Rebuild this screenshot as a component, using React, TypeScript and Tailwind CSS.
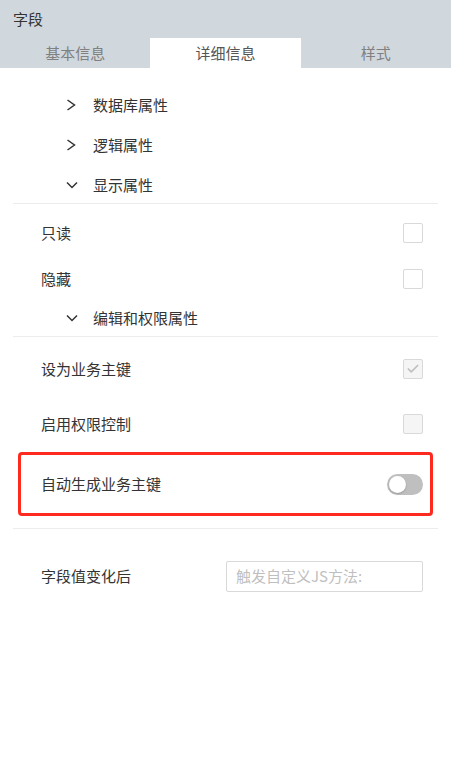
import { Check } from 'lucide-react'

const font = { fontFamily: '"Noto Sans CJK SC", "Noto Sans", sans-serif' }

function Chevron({ open }: { open?: boolean }) {
  if (open) {
    return (
      <svg width="12" height="8" viewBox="0 0 12 8" fill="none" stroke="#333" strokeWidth="1.5">
        <polyline points="1,1.5 6,6.5 11,1.5" />
      </svg>
    )
  }
  return (
    <svg width="10" height="12" viewBox="0 0 10 12" fill="none" stroke="#333" strokeWidth="1.5">
      <polyline points="1.5,1 8.5,6 1.5,11" />
    </svg>
  )
}

function Section({ label, open }: { label: string; open?: boolean }) {
  return (
    <div className="flex items-center h-10 pl-[53px] text-[15px] text-[#333]">
      <span className="w-[27px] flex items-center">
        <Chevron open={open} />
      </span>
      <span>{label}</span>
    </div>
  )
}

function Box({ checked, disabled }: { checked?: boolean; disabled?: boolean }) {
  return (
    <span
      className={`w-[20px] h-[20px] rounded-[2px] border border-[#d9d9d9] flex items-center justify-center ${
        disabled ? 'bg-[#f5f5f5]' : 'bg-white'
      }`}
    >
      {checked && <Check className="w-[14px] h-[14px] text-[#c0c0c0]" strokeWidth={3} />}
    </span>
  )
}

function Row({ label, children, h = 'h-[46px]' }: { label: string; children: React.ReactNode; h?: string }) {
  return (
    <div className={`flex items-center justify-between ${h} pl-[28px] pr-[15px] text-[15px] text-[#333]`}>
      <span>{label}</span>
      {children}
    </div>
  )
}

export default function App() {
  return (
    <div className="w-[451px] h-[759px] bg-white" style={font}>
      {/* Header */}
      <div className="bg-[#d0d8de]">
        <div className="h-[38px] flex items-center px-[13px] text-[15px] text-[#333]">字段</div>
        <div className="grid grid-cols-3 h-[30px] text-[15px]">
          <div className="flex items-center justify-center text-[#808080]">基本信息</div>
          <div className="flex items-center justify-center bg-white text-[#555]">详细信息</div>
          <div className="flex items-center justify-center text-[#808080]">样式</div>
        </div>
      </div>

      <div className="px-[13px] pt-[17px]">
        <Section label="数据库属性" />
        <Section label="逻辑属性" />
        <Section label="显示属性" open />
        <div className="border-t border-[#ececec] mt-[-2px]" />

        <div className="pt-[6px]">
          <Row label="只读"><Box /></Row>
          <Row label="隐藏"><Box /></Row>
        </div>
        <div className="mt-[-4px]">
          <Section label="编辑和权限属性" open />
        </div>
        <div className="border-t border-[#ececec] mt-[-2px]" />

        <div className="pt-[10px]">
          <Row label="设为业务主键" h="h-[44px]"><Box checked disabled /></Row>
          <div className="h-[11px]" />
          <Row label="启用权限控制" h="h-[44px]"><Box disabled /></Row>
        </div>

        <div className="mt-[6px] mx-[5px] h-[64px] border-[3px] border-[#ff2a1f] rounded-[4px] flex items-center justify-between pl-[20px] pr-[7px] text-[15px] text-[#333]">
          <span>自动生成业务主键</span>
          <span className="w-[36px] h-[21px] rounded-full bg-[#bfbfbf] flex items-center px-[2px]">
            <span className="w-[17px] h-[17px] rounded-full bg-white shadow-[0_1px_2px_rgba(0,0,0,0.2)]" />
          </span>
        </div>

        <div className="border-t border-[#ececec] mt-[12px]" />

        <div className="flex items-center justify-between mt-[32px] pl-[28px] pr-[15px] text-[15px] text-[#333]">
          <span>字段值变化后</span>
          <div className="w-[197px] h-[31px] border border-[#d9d9d9] rounded-[2px] flex items-center px-[9px] text-[#bfbfbf]">
            触发自定义JS方法:
          </div>
        </div>
      </div>
    </div>
  )
}
